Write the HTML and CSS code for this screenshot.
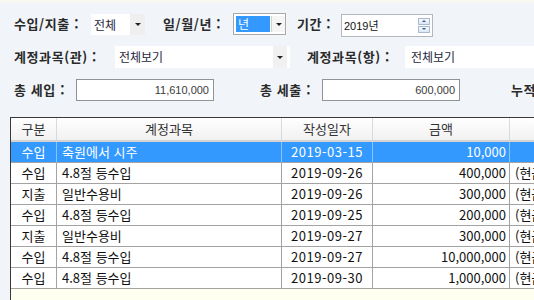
FILE: index.html
```html
<!DOCTYPE html>
<html lang="ko">
<head>
<meta charset="utf-8">
<link rel="stylesheet" href="styles.css">
</head>
<body>
<div class="topstrip"></div>
<div class="row r1">
  <span class="lbl w1">수입/지출 :</span>
  <div class="combo c1"><span class="ctext">전체</span><span class="carrow"><i class="tri"></i></span></div>
  <span class="lbl w2">일/월/년 :</span>
  <div class="combo c2"><span class="ctext"><span class="hl">년</span></span><span class="carrow"><i class="tri"></i></span></div>
  <span class="lbl w3">기간 :</span>
  <div class="spin"><span class="stext">2019년</span><span class="sbtns"><span class="sb"><i class="up"></i></span><span class="sb"><i class="dn"></i></span></span></div>
</div>
<div class="row r2">
  <span class="lbl w4">계정과목(관) :</span>
  <div class="combo f1"><span class="ctext">전체보기</span><span class="carrow"><i class="tri"></i></span></div>
  <span class="lbl w5">계정과목(항) :</span>
  <div class="combo f2"><span class="ctext">전체보기</span></div>
</div>
<div class="row r3">
  <span class="lbl w6">총 세입 :</span>
  <div class="num">11,610,000</div>
  <span class="lbl w7">총 세출 :</span>
  <div class="num">600,000</div>
  <span class="lbl w8">누적</span>
</div>
<div class="grid">
  <div class="hdr">
    <div>구분</div><div>계정과목</div><div>작성일자</div><div>금액</div><div></div>
  </div>
  <div class="tr sel">
    <div class="c">수입</div><div class="l">축원에서 시주</div><div class="c date">2019-03-15</div><div class="r">10,000</div><div class="l"></div>
  </div>
  <div class="tr">
    <div class="c">수입</div><div class="l">4.8절 등수입</div><div class="c date">2019-09-26</div><div class="r">400,000</div><div class="l">(현금)</div>
  </div>
  <div class="tr">
    <div class="c">지출</div><div class="l">일반수용비</div><div class="c date">2019-09-26</div><div class="r">300,000</div><div class="l">(현금)</div>
  </div>
  <div class="tr">
    <div class="c">수입</div><div class="l">4.8절 등수입</div><div class="c date">2019-09-25</div><div class="r">200,000</div><div class="l">(현금)</div>
  </div>
  <div class="tr">
    <div class="c">지출</div><div class="l">일반수용비</div><div class="c date">2019-09-27</div><div class="r">300,000</div><div class="l">(현금)</div>
  </div>
  <div class="tr">
    <div class="c">수입</div><div class="l">4.8절 등수입</div><div class="c date">2019-09-27</div><div class="r">10,000,000</div><div class="l">(현금)</div>
  </div>
  <div class="tr">
    <div class="c">수입</div><div class="l">4.8절 등수입</div><div class="c date">2019-09-30</div><div class="r">1,000,000</div><div class="l">(현금)</div>
  </div>
</div>
</body>
</html>
```
FILE: styles.css
```css
html, body {
  margin: 0;
  padding: 0;
}
body {
  width: 534px;
  height: 300px;
  overflow: hidden;
  background: #f1f5f9;
  font-family: "Noto Sans CJK KR", sans-serif;
  color: #222;
}
.topstrip {
  height: 3px;
  background: #f8f8f3;
}
.row {
  display: flex;
  align-items: center;
  height: 22px;
  padding-left: 14px;
  white-space: nowrap;
}
.r1 { margin-top: 10px; }
.r2 { margin-top: 11px; }
.r3 { margin-top: 11px; }
.lbl {
  flex: none;
  font-size: 13px;
  font-weight: 700;
  color: #2a2a2a;
  letter-spacing: 0.6px;
  line-height: 22px;
}
.w1 { width: 77px; }
.w2 { width: 70px; margin-left: 18px; }
.w3 { width: 44px; margin-left: 11px; }
.w4 { width: 101px; }
.w5 { width: 98px; margin-left: 17px; }
.w6 { width: 62px; }
.w7 { width: 62px; margin-left: 46px; }
.w8 { margin-left: 51px; }

.combo {
  flex: none;
  display: flex;
  height: 21px;
  background: #fff;
  box-sizing: border-box;
}
.ctext {
  flex: 1;
  font-size: 12px;
  line-height: 21px;
  padding-left: 3px;
  color: #1e1e3c;
}
.carrow {
  flex: none;
  width: 14px;
  background: #efefef;
  display: flex;
  align-items: center;
  justify-content: center;
}
.tri {
  display: block;
  width: 0;
  height: 0;
  border-left: 3px solid transparent;
  border-right: 3px solid transparent;
  border-top: 3px solid #222;
}
.c1 { width: 54px; }
.c1 .carrow { width: 15px; }
.c2 {
  width: 53px;
  height: 22px;
  border: 1px solid #a8a8a8;
  padding: 2px 0 2px 2px;
}
.c2 .ctext { padding-left: 0; line-height: 16px; }
.c2 .hl {
  display: block;
  width: 34px;
  height: 16px;
  background: #3399ff;
  color: #fff;
  padding-left: 2px;
  box-sizing: border-box;
}
.c2 .carrow {
  width: 13px;
  margin-left: 1px;
  background: #f5f5f5;
  border-left: 1px solid #d4d4d4;
}
.spin {
  flex: none;
  display: flex;
  align-items: center;
  width: 92px;
  height: 23px;
  box-sizing: border-box;
  border: 1px solid #b4b7bd;
  background: #fff;
  margin-top: 2px;
}
.stext {
  flex: 1;
  font-family: "Liberation Sans", "Noto Sans CJK KR", sans-serif;
  font-size: 11px;
  padding-left: 2px;
  color: #111;
}
.sbtns {
  display: flex;
  flex-direction: column;
  gap: 1px;
  margin-right: 2px;
}
.sb {
  width: 12px;
  height: 7px;
  box-sizing: border-box;
  border: 1px solid #a9b9cf;
  background: linear-gradient(#f3f7fc, #dde8f4);
  display: flex;
  align-items: center;
  justify-content: center;
}
.up, .dn {
  display: block;
  width: 0;
  height: 0;
  border-left: 2px solid transparent;
  border-right: 2px solid transparent;
}
.up { border-bottom: 2px solid #3d5b85; }
.dn { border-top: 2px solid #3d5b85; }

.f1 { width: 175px; height: 22px; }
.f1 .ctext { padding-left: 4px; line-height: 22px; }
.f1 .carrow { margin-right: 3px; background: #f1f1f1; }
.f2 { flex: 1; height: 22px; }
.f2 .ctext { padding-left: 6px; line-height: 22px; }

.num {
  flex: none;
  width: 138px;
  height: 22px;
  box-sizing: border-box;
  border: 1px solid #8f9296;
  background: #fff;
  font-family: "Liberation Sans", sans-serif;
  font-size: 11px;
  line-height: 20px;
  text-align: right;
  padding-right: 4px;
  color: #3a3a3a;
}

.grid {
  margin-top: 16px;
  margin-left: 10px;
  width: 600px;
  height: 200px;
  background: #fffff0;
  border-top: 1px solid #3a3a3a;
  border-left: 1px solid #3a3a3a;
  font-size: 13px;
  color: #111;
}
.hdr, .tr {
  display: grid;
  grid-template-columns: 46px 225px 91px 137px 100px;
}
.hdr > div {
  height: 24px;
  box-sizing: border-box;
  background: linear-gradient(#ffffff, #f1f1f1);
  border-right: 1px solid #dadada;
  border-bottom: 2px solid #d3d3d3;
  text-align: center;
  line-height: 22px;
  color: #333;
}
.tr > div {
  height: 21px;
  box-sizing: border-box;
  background: #fff;
  border-right: 1px solid #a3a3a3;
  border-bottom: 1px solid #a3a3a3;
  line-height: 20px;
  white-space: nowrap;
  overflow: hidden;
}
.tr .c { text-align: center; }
.tr .l { padding-left: 5px; }
.tr .r { text-align: right; padding-right: 3px; }
.tr .date { letter-spacing: 0.5px; }
.tr.sel > div {
  background: #3399ff;
  color: #fff;
  border-right-color: #8cc3ff;
}
```
